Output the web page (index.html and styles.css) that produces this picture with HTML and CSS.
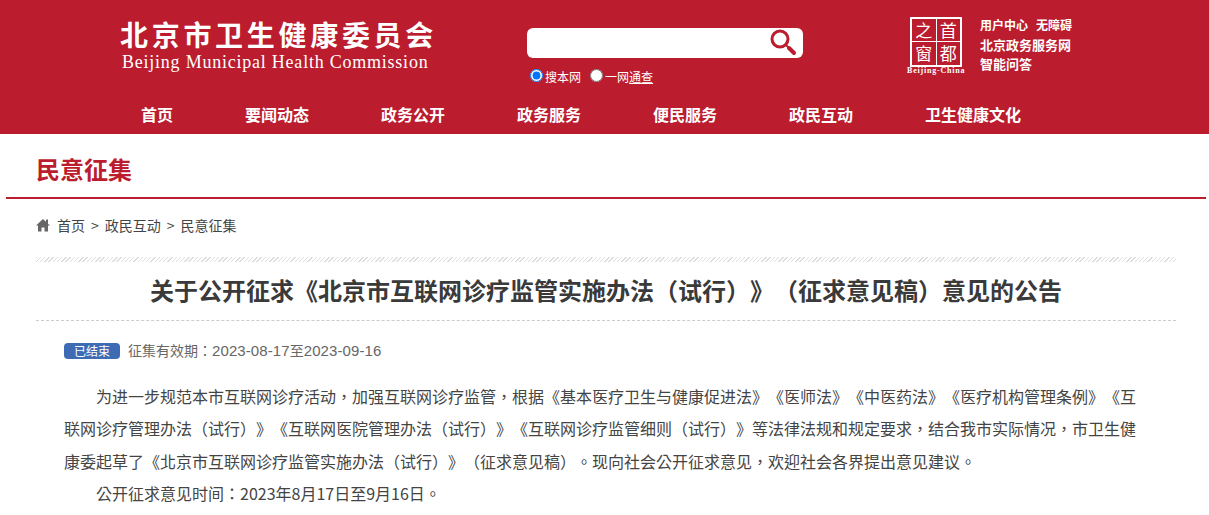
FILE: index.html
```html
<!DOCTYPE html>
<html lang="zh-CN">
<head>
    <meta charset="UTF-8">
    <title>民意征集</title>
    <link rel="stylesheet" href="styles.css">
</head>
<body>
    <header class="header">
        <div class="header-top">
            <div class="brand">
                <div class="brand-cn">北京市卫生健康委员会</div>
                <div class="brand-en">Beijing Municipal Health Commission</div>
            </div>
            <div class="search">
                <div class="search-box">
                    <svg class="search-icon" width="28" height="28" viewBox="0 0 28 28">
                        <circle cx="11" cy="11" r="8" fill="none" stroke="#bb1c2e" stroke-width="3"/>
                        <path d="M16.5 16.5 L19.5 19.5" stroke="#bb1c2e" stroke-width="2"/>
                        <path d="M20 20 L25 25" stroke="#bb1c2e" stroke-width="4" stroke-linecap="round"/>
                    </svg>
                </div>
                <div class="search-scope">
                    <input type="radio" name="scope" checked><span>搜本网</span>
                    <input type="radio" name="scope"><span>一网<u>通查</u></span>
                </div>
            </div>
            <div class="seal">
                <div class="seal-box">
                    <span>之</span><span>首</span><span>窗</span><span>都</span>
                </div>
                <div class="seal-text">Beijing-China</div>
            </div>
            <ul class="quick-links">
                <li class="quick-top"><span>用户中心</span><span>无障碍</span></li>
                <li>北京政务服务网</li>
                <li>智能问答</li>
            </ul>
        </div>
        <nav class="nav">
            <a>首页</a>
            <a>要闻动态</a>
            <a>政务公开</a>
            <a>政务服务</a>
            <a>便民服务</a>
            <a>政民互动</a>
            <a>卫生健康文化</a>
        </nav>
    </header>

    <div class="section-title"><h2>民意征集</h2></div>

    <div class="crumbs">
        <svg width="14" height="14" viewBox="0 0 14 14"><path d="M7 1 L10 3.8 V1.5 H12 V5.7 L14 7.5 H12 V13.5 H8.5 V9.5 H5.5 V13.5 H2 V7.5 H0 Z" fill="#666"/></svg>
        <span>首页</span><span>&gt;</span><span>政民互动</span><span>&gt;</span><span>民意征集</span>
    </div>

    <main class="article">
        <div class="stripes"></div>
        <h1>关于公开征求《北京市互联网诊疗监管实施办法（试行）》（征求意见稿）意见的公告</h1>
        <div class="meta" lang="zh-TW">
            <span class="badge">已结束</span>
            <span>征集有效期：<span class="dates">2023-08-17</span>至<span class="dates">2023-09-16</span></span>
        </div>
        <div class="content" lang="zh-TW">
            <p>为进一步规范本市互联网诊疗活动，加强互联网诊疗监管，根据《基本医疗卫生与健康促进法》《医师法》《中医药法》《医疗机构管理条例》《互联网诊疗管理办法（试行）》《互联网医院管理办法（试行）》《互联网诊疗监管细则（试行）》等法律法规和规定要求，结合我市实际情况，市卫生健康委起草了《北京市互联网诊疗监管实施办法（试行）》（征求意见稿）。现向社会公开征求意见，欢迎社会各界提出意见建议。</p>
            <p>公开征求意见时间：2023年8月17日至9月16日。</p>
        </div>
    </main>
</body>
</html>
```

FILE: styles.css
```css
* {
    box-sizing: border-box;
}

body {
    margin: 0;
    height: 515px;
    overflow: hidden;
    font-family: "Noto Sans CJK SC", "Liberation Sans", sans-serif;
    text-spacing-trim: space-all;
    background: #fff;
    color: #333;
}

.header {
    height: 134px;
    background-color: #bb1c2e;
    color: #fff;
    padding-left: 120px;
}

.header-top {
    display: flex;
    height: 95px;
}

.brand {
    width: 407px;
    padding-top: 14px;
}

.brand-cn {
    font-size: 28px;
    line-height: 40px;
    font-weight: 700;
    letter-spacing: 3.7px;
    white-space: nowrap;
}

.brand-en {
    font-family: "Liberation Serif", serif;
    font-size: 18px;
    line-height: 17px;
    letter-spacing: 0.77px;
    padding-left: 2px;
    white-space: nowrap;
}

.search {
    width: 382px;
    padding-top: 28px;
}

.search-box {
    width: 276px;
    height: 30px;
    background: #fff;
    border-radius: 6px;
    display: flex;
    justify-content: flex-end;
    padding-right: 6px;
}

.search-scope {
    display: flex;
    align-items: center;
    font-size: 12px;
    line-height: 18px;
    margin-top: 10px;
    padding-left: 3px;
}

.search-scope input {
    width: 13px;
    height: 13px;
    margin: 0 2px 3px 0;
}

.search-scope span {
    margin-right: 9px;
}

.seal {
    width: 71px;
    padding: 17px 0 0 1px;
}

.seal-box {
    width: 52px;
    height: 50px;
    border: 2px solid #fff;
    display: grid;
    grid-template-columns: 1fr 1fr;
    grid-template-rows: 22px 23px;
    gap: 1px;
    background: #fff;
}

.seal-box span {
    background: #bb1c2e;
    font-size: 17px;
    line-height: 22px;
    text-align: center;
}

.seal-text {
    font-family: "Liberation Serif", serif;
    font-size: 8px;
    font-weight: 700;
    line-height: 10px;
    letter-spacing: 0.8px;
    white-space: nowrap;
    margin: -1px 0 0 -3px;
}

.quick-links {
    list-style: none;
    margin: 0;
    padding: 15px 0 0;
    font-size: 13px;
    font-weight: 700;
    line-height: 19.5px;
    white-space: nowrap;
}

.quick-top {
    display: flex;
    gap: 8px;
    font-size: 12px;
}

.nav {
    display: flex;
    gap: 72px;
    padding-left: 21px;
    font-size: 16px;
    font-weight: 700;
    line-height: 38px;
}

.section-title {
    height: 65px;
    margin-left: 6px;
    margin-right: 3px;
    padding-left: 30px;
    border-bottom: 2px solid #bb1c2e;
}

.section-title h2 {
    margin: 0;
    padding-top: 17px;
    font-size: 24px;
    line-height: 36px;
    font-weight: 700;
    color: #bb1c2e;
}

.crumbs {
    display: flex;
    align-items: center;
    gap: 6px;
    height: 52px;
    padding: 0 0 0 36px;
    font-size: 14px;
    color: #444;
}

.crumbs svg {
    margin-right: 1px;
}

.article {
    margin: 0 33px 0 36px;
}

.stripes {
    height: 5px;
    margin-top: 6px;
    background: repeating-linear-gradient(135deg, #ddd 0, #ddd 1px, #fff 1px, #fff 3px);
}

.article h1 {
    margin: 0;
    height: 59px;
    border-bottom: 1px dashed #ccc;
    font-size: 24px;
    line-height: 56px;
    font-weight: 700;
    text-align: center;
    color: #3a3a3a;
    white-space: nowrap;
}

.meta {
    display: flex;
    align-items: center;
    gap: 8px;
    margin-top: 19px;
    padding-left: 28px;
    font-family: "Noto Sans CJK TC", "Liberation Sans", sans-serif;
    font-size: 14px;
    line-height: 20px;
    color: #666;
}

.dates {
    font-family: "Liberation Sans", sans-serif;
    font-size: 15px;
    letter-spacing: 0.1px;
}

.badge {
    width: 56px;
    height: 16px;
    border-radius: 4px;
    background: #3d6cb5;
    color: #fff;
    font-size: 12px;
    line-height: 16px;
    text-align: center;
}

.content {
    margin: 19px 39px 0 28px;
    font-family: "Noto Sans CJK TC", "Liberation Sans", sans-serif;
    font-size: 16px;
    line-height: 32.3px;
    color: #444;
}

.content p {
    margin: 0;
    text-indent: 32px;
}
```
